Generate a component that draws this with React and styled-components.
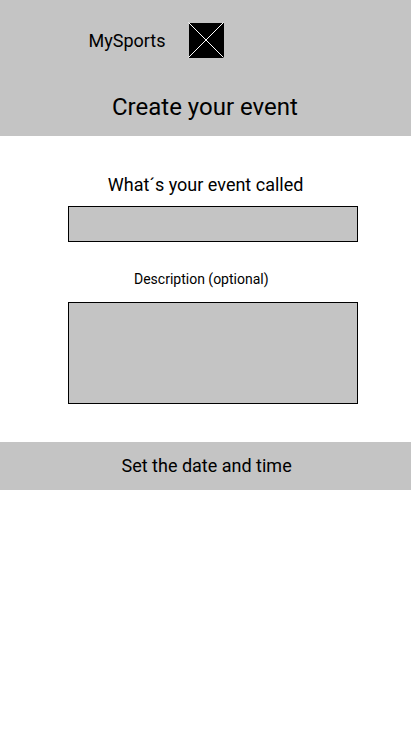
import React from "react";
import styled, { createGlobalStyle } from "styled-components";

const GlobalStyle = createGlobalStyle`
  *, *::before, *::after { box-sizing: border-box; }
  body { margin: 0; background: #fff; }
`;

const Page = styled.div`
  display: flex;
  flex-direction: column;
  width: 411px;
  height: 731px;
  background: #fff;
  color: #000;
  font-family: Roboto, sans-serif;
  overflow: hidden;
`;

const Header = styled.header`
  height: 136px;
  padding-top: 23px;
  background: #c4c4c4;
`;

const Brand = styled.div`
  display: flex;
  align-items: center;
  height: 35px;
  padding-left: 88.5px;
  font-size: 18px;
  line-height: 21px;
  white-space: nowrap;
`;

const BrandName = styled.span`
  width: 100.5px;
`;

const Logo = styled.svg`
  display: block;
  flex: none;
  overflow: visible;
`;

const Title = styled.h1`
  margin: 35px 0 0;
  padding-left: 112px;
  font-size: 24px;
  font-weight: 400;
  line-height: 28px;
  white-space: nowrap;
`;

const Form = styled.form`
  display: flex;
  flex-direction: column;
  height: 306px;
  padding: 38px 53px 0 68px;
`;

const Label = styled.label`
  height: ${(p) => p.$height}px;
  padding-left: ${(p) => p.$indent}px;
  font-size: ${(p) => p.$size}px;
  line-height: 21px;
  white-space: nowrap;
`;

const NameField = styled.input`
  width: 290px;
  height: 36px;
  margin: 0 0 27px;
  border: 1px solid #000;
  border-radius: 0;
  background: #c4c4c4;
  outline: none;
`;

const DescriptionField = styled.textarea`
  display: block;
  width: 290px;
  height: 102px;
  border: 1px solid #000;
  border-radius: 0;
  background: #c4c4c4;
  outline: none;
  resize: none;
`;

const DateButton = styled.button`
  height: 48px;
  padding: 0 0 2px 121.5px;
  border: 0;
  background: #c4c4c4;
  color: inherit;
  font: 400 18px/21px Roboto, sans-serif;
  text-align: left;
  white-space: nowrap;
`;

export default function App() {
  return (
    <Page>
      <GlobalStyle />
      <Header>
        <Brand>
          <BrandName>MySports</BrandName>
          <Logo width="35" height="35" viewBox="0 0 35 35" aria-hidden="true">
            <rect width="35" height="35" fill="#000" />
            <path d="M-.5-.5L34.5 34.5M34.5-.5L-.5 34.5" stroke="#fff" strokeWidth="1" />
          </Logo>
        </Brand>
        <Title>Create your event</Title>
      </Header>
      <Form>
        <Label htmlFor="event-name" $size={18} $indent={39.75} $height={32}>
          What´s your event called
        </Label>
        <NameField id="event-name" />
        <Label htmlFor="event-description" $size={14} $indent={66} $height={33}>
          Description (optional)
        </Label>
        <DescriptionField id="event-description" />
      </Form>
      <DateButton type="button">Set the date and time</DateButton>
    </Page>
  );
}
